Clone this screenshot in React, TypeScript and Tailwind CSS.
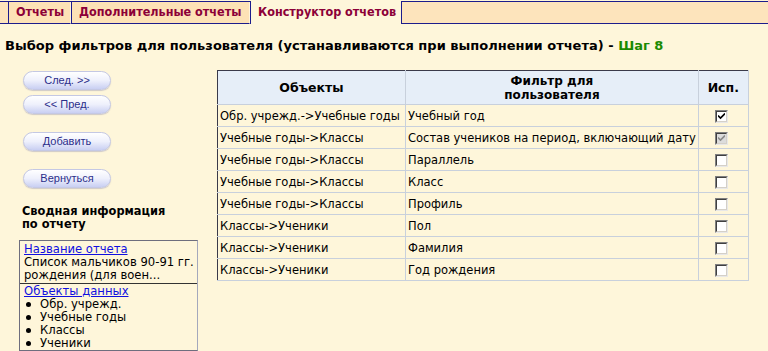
import React from "react";

type Row = { obj: string; filter: string; state: "on" | "locked" | "off" };

const rows: Row[] = [
  { obj: "Обр. учрежд.->Учебные годы", filter: "Учебный год", state: "on" },
  { obj: "Учебные годы->Классы", filter: "Состав учеников на период, включающий дату", state: "locked" },
  { obj: "Учебные годы->Классы", filter: "Параллель", state: "off" },
  { obj: "Учебные годы->Классы", filter: "Класс", state: "off" },
  { obj: "Учебные годы->Классы", filter: "Профиль", state: "off" },
  { obj: "Классы->Ученики", filter: "Пол", state: "off" },
  { obj: "Классы->Ученики", filter: "Фамилия", state: "off" },
  { obj: "Классы->Ученики", filter: "Год рождения", state: "off" },
];

function Box({ state }: { state: Row["state"] }) {
  const locked = state === "locked";
  return (
    <span
      className={[
        "inline-flex w-[13px] h-[13px] items-center justify-center border border-t-[#808080] border-l-[#808080] border-r-[#e8e8e8] border-b-[#e8e8e8]",
        locked ? "bg-[#dcdcdc]" : "bg-white",
      ].join(" ")}
    >
      <span className="flex w-[11px] h-[11px] items-center justify-center border border-t-[#404040] border-l-[#404040] border-r-[#d4d0c8] border-b-[#d4d0c8]">
        {state !== "off" && (
          <svg width="7" height="7" viewBox="0 0 7 7">
            <path d="M0 2.5 L2.5 5 L7 0.5" fill="none" stroke={locked ? "#8a8a8a" : "#000"} strokeWidth="1.6" />
          </svg>
        )}
      </span>
    </span>
  );
}

function PillButton({ label }: { label: string }) {
  return (
    <button className="w-[88px] h-[19px] rounded-full border border-[#c4c8e4] bg-gradient-to-b from-white via-[#eef0fc] to-[#c9cff2] shadow-[0_1px_1px_rgba(120,120,170,0.35)] text-[11px] leading-none text-[#2b2e8a] font-['Liberation_Sans',Arial,sans-serif]">
      {label}
    </button>
  );
}

const tab =
  "h-[22px] shrink-0 flex items-center pl-[7px] whitespace-nowrap text-[12.5px] font-bold text-[#8c0038] border-l border-l-[#1c1c8c] font-['DejaVu_Sans_Condensed','DejaVu_Sans',sans-serif]";
const cell = "border-l border-t border-l-[#3a3a4a] border-t-[#3a3a4a] border-r border-r-[#c8d0dc] border-b border-b-[#c8d0dc]";

export default function App() {
  return (
    <div className="min-h-screen bg-[#fef6da] font-['DejaVu_Sans',Verdana,sans-serif] text-black overflow-hidden">
      <div className="pt-px">
        <div className="border-t border-[#1c1c8c] bg-[#fde4bc] flex items-end h-[23px] pt-px">
          <div className="w-[8px] h-[22px] border-b border-[#1c1c8c]" />
          <div className={tab + " w-[63px] border-b border-b-[#1c1c8c] border-r border-r-[#fff4dc] bg-[#fde2b6]"}>Отчеты</div>
          <div className={tab + " w-[179px] border-b border-b-[#1c1c8c] border-r border-r-[#fff4dc] bg-[#fde2b6]"}>
            Дополнительные отчеты
          </div>
          <div className={tab + " w-[152px] border-r border-r-[#1c1c8c] bg-[#fef6da] h-[23px]"}>Конструктор отчетов</div>
          <div className="flex-1 h-[22px] border-b border-[#1c1c8c]" />
        </div>
      </div>

      <h1 className="px-[5px] pt-[14px] pb-[15px] text-[13px] leading-[16px] font-bold whitespace-nowrap">
        Выбор фильтров для пользователя (устанавливаются при выполнении отчета) -{" "}
        <span className="text-[#1a8a00]">Шаг 8</span>
      </h1>

      <div className="flex items-start pt-[1px]">
        <div className="w-[217px] shrink-0 pl-[19px]">
          <div className="pl-[4px] flex flex-col pt-[1px]">
            <PillButton label="След. >>" />
            <div className="h-[5px]" />
            <PillButton label="<< Пред." />
            <div className="h-[18px]" />
            <PillButton label="Добавить" />
            <div className="h-[18px]" />
            <PillButton label="Вернуться" />
          </div>
          <div className="pl-[3px] mt-[17px] text-[11.4px] leading-[13px] font-bold">
            Сводная информация
            <br />
            по отчету
          </div>
          <div className="mt-[9px] w-[179px] border border-[#6e6e7e] border-r-[#a4a8bc] text-[11.6px] leading-[13px] whitespace-nowrap">
            <div className="pl-[4px] pr-[2px] pt-[2px] pb-[1px]">
              <div className="text-[#1010e0] underline">Название отчета</div>
              <div>Список мальчиков 90-91 гг.</div>
              <div>рождения (для воен...</div>
            </div>
            <div className="border-t border-[#333] pl-[4px] pt-px">
              <div className="text-[#1010e0] underline">Объекты данных</div>
              {["Обр. учрежд.", "Учебные годы", "Классы", "Ученики"].map((t) => (
                <div key={t} className="flex items-center">
                  <span className="w-[5px] h-[5px] rounded-full bg-black ml-[2px] mr-[9px]" />
                  {t}
                </div>
              ))}
            </div>
          </div>
        </div>

        <table className="self-start border-collapse border-r border-b border-r-[#a8b0c4] border-b-[#a8b0c4] text-[11.5px] leading-[14px]">
          <thead>
            <tr className="bg-[#e6eef8] h-[34px]">
              <th className={"w-[188px] font-bold text-[12.5px] leading-[14px] text-center " + cell}>Объекты</th>
              <th className={"w-[292px] font-bold text-[12px] leading-[14px] text-center " + cell}>
                Фильтр для
                <br />
                пользователя
              </th>
              <th className={"w-[50px] font-bold text-[12.5px] leading-[14px] text-center " + cell}>Исп.</th>
            </tr>
          </thead>
          <tbody>
            {rows.map((r, i) => (
              <tr key={i} className="h-[22px]">
                <td className={"px-[2px] py-0 whitespace-nowrap " + cell}>{r.obj}</td>
                <td className={"px-[2px] py-0 whitespace-nowrap " + cell}>{r.filter}</td>
                <td className={"p-0 text-center " + cell}>
                  <div className="flex justify-center pr-[4px] pt-[1px]">
                    <Box state={r.state} />
                  </div>
                </td>
              </tr>
            ))}
          </tbody>
        </table>
      </div>
    </div>
  );
}
